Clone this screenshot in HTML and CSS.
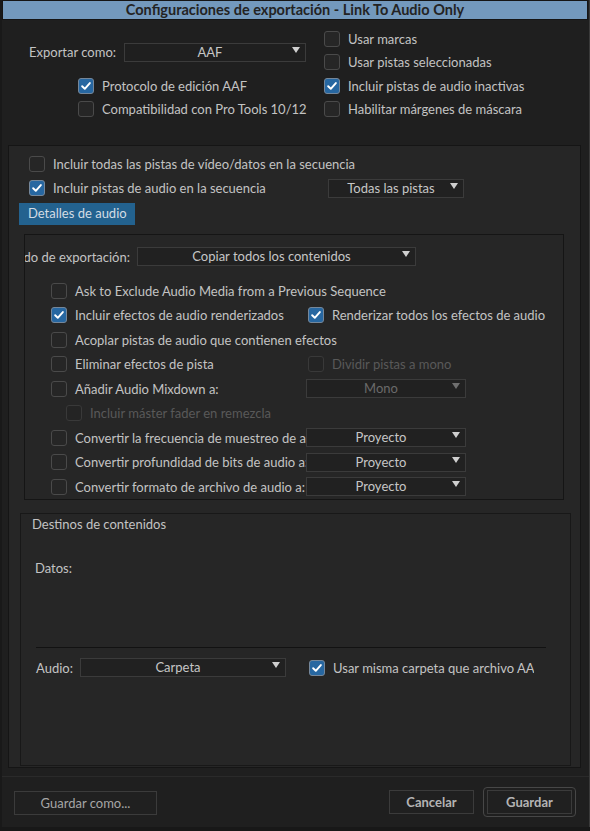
FILE: index.html
```html
<!DOCTYPE html>
<html lang="es">
<head>
<meta charset="utf-8">
<title>Configuraciones de exportación - Link To Audio Only</title>
<link rel="stylesheet" href="styles.css">
</head>
<body>
<div class="dialog">
  <div class="titlebar">Configuraciones de exportación - Link To Audio Only</div>

  <div class="top">
    <div class="export-row">
      <span class="label">Exportar como:</span>
      <div class="select sel-export"><span>AAF</span><i class="arrow"></i></div>
    </div>
    <label class="check col2 row1"><span class="box"></span><span>Usar marcas</span></label>
    <label class="check col2 row2"><span class="box"></span><span>Usar pistas seleccionadas</span></label>
    <label class="check col1 row3 checked indent"><span class="box"><svg viewBox="0 0 16 16"><path d="M3.6 8.3 L6.6 11.2 L12.4 4.6"/></svg></span><span>Protocolo de edición AAF</span></label>
    <label class="check col2 row3 checked"><span class="box"><svg viewBox="0 0 16 16"><path d="M3.6 8.3 L6.6 11.2 L12.4 4.6"/></svg></span><span>Incluir pistas de audio inactivas</span></label>
    <label class="check col1 row4 indent"><span class="box"></span><span>Compatibilidad con Pro Tools 10/12</span></label>
    <label class="check col2 row4"><span class="box"></span><span>Habilitar márgenes de máscara</span></label>
  </div>

  <div class="panel">
    <div class="prow first">
      <label class="check"><span class="box"></span><span>Incluir todas las pistas de vídeo/datos en la secuencia</span></label>
    </div>
    <div class="prow">
      <label class="check wide checked"><span class="box"><svg viewBox="0 0 16 16"><path d="M3.6 8.3 L6.6 11.2 L12.4 4.6"/></svg></span><span>Incluir pistas de audio en la secuencia</span></label>
      <div class="select sel-tracks"><span>Todas las pistas</span><i class="arrow"></i></div>
    </div>
    <div class="tab">Detalles de audio</div>

    <div class="details">
      <div class="mode-row">
        <div class="mode-label"><span>Modo de exportación:</span></div>
        <div class="select sel-mode"><span>Copiar todos los contenidos</span><i class="arrow"></i></div>
      </div>
      <div class="opts">
        <label class="check span"><span class="box"></span><span>Ask to Exclude Audio Media from a Previous Sequence</span></label>

        <label class="check checked"><span class="box"><svg viewBox="0 0 16 16"><path d="M3.6 8.3 L6.6 11.2 L12.4 4.6"/></svg></span><span>Incluir efectos de audio renderizados</span></label>
        <label class="check checked c2"><span class="box"><svg viewBox="0 0 16 16"><path d="M3.6 8.3 L6.6 11.2 L12.4 4.6"/></svg></span><span>Renderizar todos los efectos de audio</span></label>

        <label class="check span"><span class="box"></span><span>Acoplar pistas de audio que contienen efectos</span></label>

        <label class="check"><span class="box"></span><span>Eliminar efectos de pista</span></label>
        <label class="check disabled c2"><span class="box"></span><span>Dividir pistas a mono</span></label>

        <label class="check"><span class="box"></span><span>Añadir Audio Mixdown a:</span></label>
        <div class="select sel-opt disabled"><span>Mono</span><i class="arrow"></i></div>

        <label class="check span disabled sub"><span class="box"></span><span>Incluir máster fader en remezcla</span></label>

        <label class="check clip"><span class="box"></span><span>Convertir la frecuencia de muestreo de audio a:</span></label>
        <div class="select sel-opt"><span>Proyecto</span><i class="arrow"></i></div>

        <label class="check clip"><span class="box"></span><span>Convertir profundidad de bits de audio a:</span></label>
        <div class="select sel-opt"><span>Proyecto</span><i class="arrow"></i></div>

        <label class="check clip"><span class="box"></span><span>Convertir formato de archivo de audio a:</span></label>
        <div class="select sel-opt"><span>Proyecto</span><i class="arrow"></i></div>
      </div>
    </div>

    <div class="dest">
      <div class="dest-title">Destinos de contenidos</div>
      <div class="dest-data">Datos:</div>
      <div class="dest-rule"></div>
      <div class="dest-audio">
        <span class="audio-label">Audio:</span>
        <div class="select sel-folder"><span>Carpeta</span><i class="arrow"></i></div>
        <label class="check checked same"><span class="box"><svg viewBox="0 0 16 16"><path d="M3.6 8.3 L6.6 11.2 L12.4 4.6"/></svg></span><span>Usar misma carpeta que archivo AAF</span></label>
      </div>
    </div>
  </div>

  <div class="footer">
    <button class="btn save-as">Guardar como...</button>
    <div class="actions">
      <button class="btn strong">Cancelar</button>
      <span class="focus-ring"><button class="btn strong">Guardar</button></span>
    </div>
  </div>
</div>
</body>
</html>
```

FILE: styles.css
```css
* { box-sizing: border-box; }

html, body {
  margin: 0;
  padding: 0;
  background: #181818;
}

body {
  font-family: Lato, "Open Sans", "Liberation Sans", sans-serif;
  font-size: 13px;
  color: #c3c3c3;
}

.dialog {
  width: 590px;
  height: 827px;
  background: #1f1f1f;
  border-left: 2px solid #191919;
  border-right: 1px solid #3a3a3a;
  position: relative;
}

.titlebar {
  height: 20px;
  margin-right: 1px;
  background: #7399bd;
  border: 1px solid #151515;
  color: #232323;
  font-weight: 700;
  font-size: 14.5px;
  line-height: 17px;
  text-align: center;
}

/* ---------- top section ---------- */
.top {
  height: 125px;
  padding-top: 7.5px;
  display: grid;
  grid-template-columns: 322px 1fr;
  grid-template-rows: 23px 23px 24px 23px;
}

.export-row {
  grid-column: 1;
  grid-row: 1 / 3;
  align-self: center;
  display: flex;
  align-items: center;
  padding-left: 27px;
  margin-top: 3px;
}
.export-row .label { width: 95px; }

.col1 { grid-column: 1; }
.col2 { grid-column: 2; }
.row1 { grid-row: 1; }
.row2 { grid-row: 2; }
.row3 { grid-row: 3; }
.row4 { grid-row: 4; }
.top .indent { padding-left: 76px; }

/* ---------- checkbox ---------- */
.check {
  display: flex;
  align-items: center;
  gap: 8px;
  white-space: nowrap;
}
.box {
  flex: none;
  width: 16px;
  height: 16px;
  border: 1px solid #4a4a4a;
  border-radius: 3px;
  background: #262626;
  display: flex;
  align-items: center;
  justify-content: center;
}
.box svg { width: 14px; height: 14px; }
.box path {
  fill: none;
  stroke: #ffffff;
  stroke-width: 2.2;
  stroke-linecap: round;
  stroke-linejoin: round;
}
.checked .box {
  background: #2767a1;
  border-color: #75879a;
}
.disabled { color: #595959; }
.disabled .box { border-color: #393939; background: #242424; }

/* ---------- select ---------- */
.select {
  position: relative;
  flex: none;
  height: 19px;
  border: 1px solid #3b3b3b;
  background: #212121;
  color: #c6c6c6;
  text-align: center;
  line-height: 17px;
  padding-right: 10px;
  white-space: nowrap;
}
.arrow {
  position: absolute;
  top: 3px;
  right: 5px;
  width: 0;
  height: 0;
  border-left: 4px solid transparent;
  border-right: 4px solid transparent;
  border-top: 6px solid #cfcfcf;
}
.select.disabled { color: #6a6a6a; }
.select.disabled .arrow { border-top-color: #6f6f6f; }

.sel-export { width: 182px; background: #1f1f1f; }
.sel-tracks { width: 136px; }
.sel-mode { width: 279px; }
.sel-opt { width: 160px; margin-left: -1px; }
.sel-folder { width: 206px; }

/* ---------- main panel ---------- */
.panel {
  margin-left: 6px;
  width: 573px;
  height: 623px;
  background: #262626;
  border: 1px solid #151515;
}

.prow {
  display: flex;
  align-items: center;
  height: 20px;
  padding-left: 20px;
  margin-top: 4px;
}
.prow.first { margin-top: 8px; }
.prow .wide { width: 299px; }

.tab {
  margin-top: 5px;
  margin-left: 10px;
  width: 116px;
  height: 22px;
  background: #23628f;
  color: #d3dce4;
  line-height: 21px;
  padding-left: 9px;
}

/* ---------- audio details box ---------- */
.details {
  margin-top: 9px;
  margin-left: 15px;
  width: 540px;
  height: 266px;
  border: 1px solid #151515;
  overflow: hidden;
}

.mode-row {
  display: flex;
  align-items: center;
  gap: 7px;
  margin-top: 12px;
}
.mode-label {
  width: 105px;
  display: flex;
  justify-content: flex-end;
  white-space: nowrap;
}

.opts {
  margin-top: 12.5px;
  margin-left: 26px;
  display: grid;
  grid-template-columns: 256px 160px;
  grid-auto-rows: 24.5px;
  align-items: center;
}
.opts .span { grid-column: 1 / -1; }
.opts .c2 { padding-left: 1px; }
.opts .sub { padding-left: 15px; }
.opts .clip { overflow: hidden; }

/* ---------- destinations ---------- */
.dest {
  margin-top: 13px;
  margin-left: 11px;
  width: 551px;
  height: 253px;
  border: 1px solid #181818;
  padding-left: 11px;
}
.dest-title {
  margin-top: 2px;
  line-height: 16px;
}
.dest-data {
  margin-top: 28px;
  margin-left: 3px;
  line-height: 16px;
}
.dest-rule {
  margin-top: 71px;
  margin-left: 4px;
  width: 510px;
  border-top: 1px solid #121212;
}
.dest-audio {
  margin-top: 10px;
  margin-left: 4px;
  display: flex;
  align-items: center;
  height: 19px;
}
.audio-label { width: 44px; }
.dest-audio .same {
  margin-left: 23px;
  width: 225px;
  overflow: hidden;
}

/* ---------- footer ---------- */
.footer {
  margin-top: 8px;
  border-top: 1px solid #2a2a2a;
  display: flex;
  justify-content: space-between;
  align-items: flex-start;
  padding: 10px 13px 0 12px;
}
.btn {
  font-family: inherit;
  font-size: 13px;
  height: 24px;
  background: #202020;
  border: 1px solid #3b3b3b;
  color: #a6a6a6;
  padding: 0;
  border-radius: 0;
}
.save-as {
  width: 143px;
  margin-top: 4px;
}
.actions {
  display: flex;
  align-items: center;
  gap: 9px;
}
.strong {
  width: 85px;
  font-weight: 700;
  color: #b4b4b4;
}
.focus-ring {
  display: flex;
  padding: 2px 3px;
  border: 1px solid #474747;
  border-radius: 4px;
}
```
